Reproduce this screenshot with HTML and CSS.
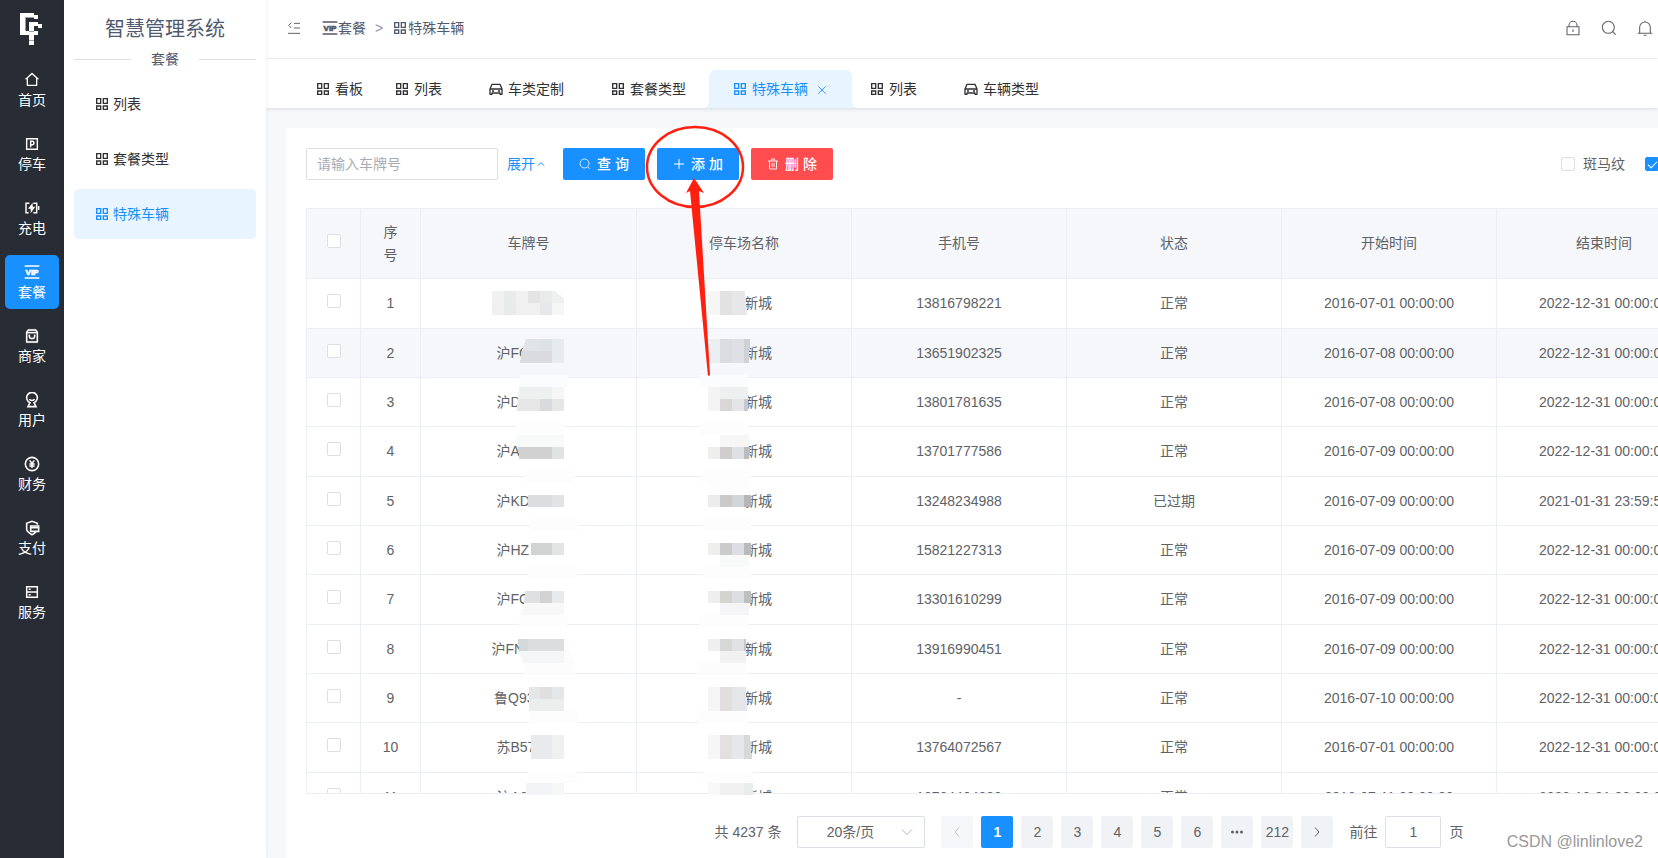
FILE: index.html
```html
<!DOCTYPE html>
<html lang="zh-CN">
<head>
<meta charset="utf-8">
<title>智慧管理系统</title>
<link rel="stylesheet" href="styles.css">
</head>
<body>
<svg class="sprite" aria-hidden="true">
  <symbol id="i-grid" viewBox="0 0 24 24"><path fill="none" stroke="currentColor" stroke-width="2" d="M4 4h6v7H4zM14 4h6v7h-6zM4 15h6v5H4zM14 15h6v5h-6z"/></symbol>
  <symbol id="i-home" viewBox="0 0 24 24"><path fill="currentColor" d="M19 21H5a1 1 0 0 1-1-1v-9H1l10.327-9.388a1 1 0 0 1 1.346 0L23 11h-3v9a1 1 0 0 1-1 1zM6 19h12V9.157l-6-5.454-6 5.454z"/></symbol>
  <symbol id="i-park" viewBox="0 0 24 24"><path fill="none" stroke="currentColor" stroke-width="2.200" d="M4 4h16v16H4zM10 17V8h2.500a2.500 2.500 0 0 1 0 5H10"/></symbol>
  <symbol id="i-charge" viewBox="0 0 24 24"><path fill="none" stroke="currentColor" stroke-width="2.200" d="M8 5H3v14h4M14 5h5v14h-5M22 9v6"/><path fill="currentColor" d="M13 4v6h4l-7 10v-7H6z"/></symbol>
  <symbol id="i-vip" viewBox="0 0 24 24"><path fill="currentColor" d="M1 2h22v2H1zM1 20h22v2H1z"/><text x="12" y="16.500" text-anchor="middle" class="vip-text">VIP</text></symbol>
  <symbol id="i-shop" viewBox="0 0 24 24"><path fill="currentColor" stroke="currentColor" stroke-width=".4" d="M6.500 2h11a1 1 0 0 1 .8.400L21 6v15a1 1 0 0 1-1 1H4a1 1 0 0 1-1-1V6l2.700-3.600a1 1 0 0 1 .8-.400zM19 8H5v12h14zm-.500-2L17 4H7L5.500 6zM9 10v2a3 3 0 0 0 6 0v-2h2v2a5 5 0 0 1-10 0v-2z"/></symbol>
  <symbol id="i-user" viewBox="0 0 24 24"><path fill="none" stroke="currentColor" stroke-width="2.400" d="M9 16a8 8 0 1 1 6 0l3 6H6zM8.500 10.500c1 3 6 3 7 0"/></symbol>
  <symbol id="i-money" viewBox="0 0 24 24"><circle cx="12" cy="12" r="10" fill="none" stroke="currentColor" stroke-width="2.400"/><path fill="none" stroke="currentColor" stroke-width="2.200" d="M8.500 6.500L12 11l3.500-4.500M8 12h8M8 15h8M12 11v7"/></symbol>
  <symbol id="i-pay" viewBox="0 0 24 24"><path fill="none" stroke="currentColor" stroke-width="2.400" d="M20 7V5l-8-3-8 3v9c0 4 4 6 8 8 3-1 5-3 6-4M10 9h12v8H10z"/><path stroke="currentColor" stroke-width="2.500" d="M10 11.500h12"/></symbol>
  <symbol id="i-server" viewBox="0 0 24 24"><path fill="none" stroke="currentColor" stroke-width="2.200" d="M4 4h16v16H4zM4 12h16M7 8h3M7 16h3"/></symbol>
  <symbol id="i-car" viewBox="0 0 24 24"><path fill="none" stroke="currentColor" stroke-width="2" stroke-linejoin="round" d="M3 20v-8l3-7h12l3 7v8h-3v-2H6v2zM3 12h18M6 15h3M15 15h3"/></symbol>
  <symbol id="i-fold" viewBox="0 0 24 24"><path fill="none" stroke="currentColor" stroke-width="1.500" d="M12 5h9M12 12h9M3 20h18M8 4L4 8l4 4"/></symbol>
  <symbol id="i-lock" viewBox="0 0 24 24"><path fill="none" stroke="currentColor" stroke-width="1.600" d="M3 10h18v12H3zM6 10V8a6 6 0 0 1 12 0v2M12 14v4"/></symbol>
  <symbol id="i-search" viewBox="0 0 24 24"><circle cx="11" cy="11" r="9" fill="none" stroke="currentColor" stroke-width="1.600"/><path stroke="currentColor" stroke-width="1.600" d="M17.500 17.500L22 22"/></symbol>
  <symbol id="i-bell" viewBox="0 0 24 24"><path fill="none" stroke="currentColor" stroke-width="1.600" d="M1 20h22M4 20v-9a8 8 0 0 1 16 0v9M12 1v2M10 23h4"/></symbol>
  <symbol id="i-plus" viewBox="0 0 24 24"><path stroke="currentColor" stroke-width="2" d="M12 2v20M2 12h20"/></symbol>
  <symbol id="i-trash" viewBox="0 0 24 24"><path fill="none" stroke="currentColor" stroke-width="1.800" d="M2 6h20M5 6v16h14V6M9 5V2h6v3M10 10v8M14 10v8"/></symbol>
  <symbol id="i-close" viewBox="0 0 24 24"><path stroke="currentColor" stroke-width="2" d="M3 3l18 18M21 3L3 21"/></symbol>
  <symbol id="i-left" viewBox="0 0 24 24"><path fill="none" stroke="currentColor" stroke-width="2" d="M16 3l-8 9 8 9"/></symbol>
  <symbol id="i-right" viewBox="0 0 24 24"><path fill="none" stroke="currentColor" stroke-width="2" d="M8 3l8 9-8 9"/></symbol>
  <symbol id="i-up" viewBox="0 0 24 24"><path fill="none" stroke="currentColor" stroke-width="3" d="M3 17l9-9 9 9"/></symbol>
  <symbol id="i-down" viewBox="0 0 24 24"><path fill="none" stroke="currentColor" stroke-width="1.800" d="M2 7l10 10L22 7"/></symbol>
</svg>

<div class="app">
  <nav class="rail" aria-label="主导航">
    <svg class="logo" viewBox="0 0 24 32" aria-hidden="true">
      <path fill="#fff" d="M0 0h14v4H5v14h4v4H0zM14 2h4v4h-4zM9 9h9v4h-4v5h4v4h-4v10H9zM18 11h4v4h-4z"/>
      <path fill="#9a9da2" d="M5 4h9v1H6v13H5zM9 27h5v1H9zM9 18h5v1H9z"/>
    </svg>
    <a class="rail-item" href="#"><svg class="icon"><use href="#i-home"/></svg>首页</a>
    <a class="rail-item" href="#"><svg class="icon"><use href="#i-park"/></svg>停车</a>
    <a class="rail-item" href="#"><svg class="icon"><use href="#i-charge"/></svg>充电</a>
    <a class="rail-item active" href="#"><svg class="icon"><use href="#i-vip"/></svg>套餐</a>
    <a class="rail-item" href="#"><svg class="icon"><use href="#i-shop"/></svg>商家</a>
    <a class="rail-item" href="#"><svg class="icon"><use href="#i-user"/></svg>用户</a>
    <a class="rail-item" href="#"><svg class="icon"><use href="#i-money"/></svg>财务</a>
    <a class="rail-item" href="#"><svg class="icon"><use href="#i-pay"/></svg>支付</a>
    <a class="rail-item" href="#"><svg class="icon"><use href="#i-server"/></svg>服务</a>
  </nav>

  <aside class="side">
    <h1 class="side-title">智慧管理系统</h1>
    <div class="side-divider">套餐</div>
    <a class="side-item" href="#"><svg class="icon"><use href="#i-grid"/></svg>列表</a>
    <a class="side-item" href="#"><svg class="icon"><use href="#i-grid"/></svg>套餐类型</a>
    <a class="side-item active" href="#"><svg class="icon"><use href="#i-grid"/></svg>特殊车辆</a>
  </aside>

  <main class="main">
    <header class="header">
      <button class="icon-btn" type="button" aria-label="折叠"><svg class="icon"><use href="#i-fold"/></svg></button>
      <div class="crumbs">
        <a href="#"><svg class="icon"><use href="#i-vip"/></svg>套餐</a>
        <span class="crumb-sep">&gt;</span>
        <a href="#"><svg class="icon"><use href="#i-grid"/></svg>特殊车辆</a>
      </div>
      <div class="header-tools">
        <button class="icon-btn" type="button" aria-label="锁屏"><svg class="icon"><use href="#i-lock"/></svg></button>
        <button class="icon-btn" type="button" aria-label="搜索"><svg class="icon"><use href="#i-search"/></svg></button>
        <button class="icon-btn" type="button" aria-label="通知"><svg class="icon"><use href="#i-bell"/></svg></button>
      </div>
    </header>

    <nav class="tabs" aria-label="标签页">
      <a class="tab pinned" href="#"><svg class="icon"><use href="#i-grid"/></svg>看板</a>
      <a class="tab near" href="#"><svg class="icon"><use href="#i-grid"/></svg>列表</a>
      <a class="tab" href="#"><svg class="icon"><use href="#i-car"/></svg>车类定制</a>
      <a class="tab" href="#"><svg class="icon"><use href="#i-grid"/></svg>套餐类型</a>
      <a class="tab active" href="#"><svg class="icon"><use href="#i-grid"/></svg>特殊车辆<svg class="tab-close"><use href="#i-close"/></svg></a>
      <a class="tab after" href="#"><svg class="icon"><use href="#i-grid"/></svg>列表</a>
      <a class="tab" href="#"><svg class="icon"><use href="#i-car"/></svg>车辆类型</a>
    </nav>

    <section class="card">
      <div class="toolbar">
        <input class="field" type="text" placeholder="请输入车牌号" aria-label="车牌号">
        <a class="expand" href="#">展开<svg class="caret"><use href="#i-up"/></svg></a>
        <button class="btn" type="button"><svg class="btn-icon"><use href="#i-search"/></svg>查 询</button>
        <button class="btn" type="button"><svg class="btn-icon"><use href="#i-plus"/></svg>添 加</button>
        <button class="btn danger" type="button"><svg class="btn-icon"><use href="#i-trash"/></svg>删 除</button>
        <div class="options">
          <label class="option"><input class="check" type="checkbox">斑马纹</label>
          <input class="check" type="checkbox" checked aria-label="边框">
        </div>
      </div>

      <div class="table-wrap">
        <table class="table">
          <colgroup><col class="c-check"><col class="c-no"><col class="c-plate"><col class="c-data"><col class="c-data"><col class="c-data"><col class="c-data"><col class="c-data"></colgroup>
          <thead>
            <tr><th><input class="check" type="checkbox" aria-label="全选"></th><th><span class="narrow">序号</span></th><th>车牌号</th><th>停车场名称</th><th>手机号</th><th>状态</th><th>开始时间</th><th>结束时间</th></tr>
          </thead>
          <tbody>
            <tr><td><input class="check" type="checkbox" aria-label="选择 1"></td><td>1</td><td></td><td><span class="lot">新城</span></td><td>13816798221</td><td>正常</td><td>2016-07-01 00:00:00</td><td>2022-12-31 00:00:00</td></tr>
            <tr class="hover"><td><input class="check" type="checkbox" aria-label="选择 2"></td><td>2</td><td><span class="plate">沪FC</span></td><td><span class="lot">新城</span></td><td>13651902325</td><td>正常</td><td>2016-07-08 00:00:00</td><td>2022-12-31 00:00:00</td></tr>
            <tr><td><input class="check" type="checkbox" aria-label="选择 3"></td><td>3</td><td><span class="plate">沪D</span></td><td><span class="lot">新城</span></td><td>13801781635</td><td>正常</td><td>2016-07-08 00:00:00</td><td>2022-12-31 00:00:00</td></tr>
            <tr><td><input class="check" type="checkbox" aria-label="选择 4"></td><td>4</td><td><span class="plate">沪A</span></td><td><span class="lot">新城</span></td><td>13701777586</td><td>正常</td><td>2016-07-09 00:00:00</td><td>2022-12-31 00:00:00</td></tr>
            <tr><td><input class="check" type="checkbox" aria-label="选择 5"></td><td>5</td><td><span class="plate">沪KD</span></td><td><span class="lot">新城</span></td><td>13248234988</td><td>已过期</td><td>2016-07-09 00:00:00</td><td>2021-01-31 23:59:59</td></tr>
            <tr><td><input class="check" type="checkbox" aria-label="选择 6"></td><td>6</td><td><span class="plate">沪HZ</span></td><td><span class="lot">新城</span></td><td>15821227313</td><td>正常</td><td>2016-07-09 00:00:00</td><td>2022-12-31 00:00:00</td></tr>
            <tr><td><input class="check" type="checkbox" aria-label="选择 7"></td><td>7</td><td><span class="plate">沪FC</span></td><td><span class="lot">新城</span></td><td>13301610299</td><td>正常</td><td>2016-07-09 00:00:00</td><td>2022-12-31 00:00:00</td></tr>
            <tr><td><input class="check" type="checkbox" aria-label="选择 8"></td><td>8</td><td><span class="plate long">沪FN</span></td><td><span class="lot">新城</span></td><td>13916990451</td><td>正常</td><td>2016-07-09 00:00:00</td><td>2022-12-31 00:00:00</td></tr>
            <tr><td><input class="check" type="checkbox" aria-label="选择 9"></td><td>9</td><td><span class="plate mid">鲁Q93</span></td><td><span class="lot">新城</span></td><td>-</td><td>正常</td><td>2016-07-10 00:00:00</td><td>2022-12-31 00:00:00</td></tr>
            <tr><td><input class="check" type="checkbox" aria-label="选择 10"></td><td>10</td><td><span class="plate">苏B57</span></td><td><span class="lot">新城</span></td><td>13764072567</td><td>正常</td><td>2016-07-01 00:00:00</td><td>2022-12-31 00:00:00</td></tr>
            <tr><td><input class="check" type="checkbox" aria-label="选择 11"></td><td>11</td><td><span class="plate">沪A6</span></td><td><span class="lot">新城</span></td><td>13764404888</td><td>正常</td><td>2016-07-11 00:00:00</td><td>2022-12-31 00:00:00</td></tr>
          </tbody>
        </table>
      </div>

      <div class="pager">
        <span class="total">共 4237 条</span>
        <span class="select-box"><select class="size" aria-label="每页条数"><option>20条/页</option></select><svg class="select-arrow"><use href="#i-down"/></svg></span>
        <div class="pages">
          <button class="page" type="button" disabled aria-label="上一页"><svg class="page-icon"><use href="#i-left"/></svg></button>
          <button class="page current" type="button">1</button>
          <button class="page" type="button">2</button>
          <button class="page" type="button">3</button>
          <button class="page" type="button">4</button>
          <button class="page" type="button">5</button>
          <button class="page" type="button">6</button>
          <button class="page" type="button" aria-label="更多"><svg class="page-icon" viewBox="0 0 12 12"><path fill="currentColor" d="M0 6a1.500 1.500 0 1 1 3 0a1.500 1.500 0 1 1-3 0M4.500 6a1.500 1.500 0 1 1 3 0a1.500 1.500 0 1 1-3 0M9 6a1.500 1.500 0 1 1 3 0a1.500 1.500 0 1 1-3 0"/></svg></button>
          <button class="page" type="button">212</button>
          <button class="page" type="button" aria-label="下一页"><svg class="page-icon"><use href="#i-right"/></svg></button>
        </div>
        <label class="jump">前往<input class="jump-input" type="text" value="1">页</label>
      </div>
    </section>
  </main>

  <svg class="notes" width="500" height="700" viewBox="300 110 500 700" aria-hidden="true">
    <!-- redaction over the plate column -->
    <g shape-rendering="crispEdges">
      <path fill="#f1f1f1" d="M492 291h12v12h-12zM516 291h12v12h-12z"/>
      <path fill="#e9eaea" d="M504 291h12v12h-12zM540 291h12v12h-12zM504 303h12v12h-12z"/>
      <path fill="#e4e4e4" d="M528 291h12v12h-12z"/>
      <path fill="#f0f0f0" d="M552 291h3l9 7v5h-12zM492 303h12v12h-12zM516 303h24v12h-24z"/>
      <path fill="#e7e8ea" d="M540 303h12v12h-12z"/><path fill="#f6f6f6" d="M552 303h12v12h-12z"/>

      <path fill="#e0e3e7" d="M526 339h14v12h-18z"/><path fill="#dee2e5" d="M540 339h12v12h-12z"/><path fill="#e7ebee" d="M552 339h12v24h-12z"/>
      <path fill="#dadbdf" d="M522 351h30v12h-32z"/>

      <path fill="#fbfcfe" d="M519 375h49v12h-49z"/><path fill="#eeefef" d="M519 387h33v12h-34z"/><path fill="#f6f6f6" d="M552 387h12v12h-12z"/>
      <path fill="#e6e6e7" d="M518 399h46v12h-47z"/><path fill="#d9dadc" d="M540 399h12v12h-12z"/>

      <path fill="#fdfdfe" d="M516 423h49v12h-49z"/><path fill="#f8f9f9" d="M516 435h48v12h-47z"/>
      <path fill="#d1d1d1" d="M518 447h34v12h-33z"/><path fill="#e1e2e2" d="M552 447h12v12h-12z"/>

      <path fill="#fdfdfe" d="M524 471h50v12h-50z"/><path fill="#fff" d="M528 483h36v12h-36z"/>
      <path fill="#dcddde" d="M528 495h24v12h-24z"/><path fill="#e2e3e4" d="M552 495h12v12h-12z"/>

      <path fill="#fdfdfe" d="M530 519h49v12h-49z"/><path fill="#d1d2d2" d="M531 543h21v12h-21z"/><path fill="#e3e4e4" d="M552 543h12v12h-12z"/>

      <path fill="#fdfdfe" d="M528 567h49v12h-49z"/><path fill="#dfe0e2" d="M525 591h15v12h-16z"/><path fill="#d2d2d3" d="M540 591h12v12h-12z"/><path fill="#e9eaec" d="M552 591h12v12h-12z"/>
      <path fill="#f8f8f8" d="M524 603h40v12h-43z"/>

      <path fill="#fdfdfe" d="M519 615h50l-2 12h-48z"/><path fill="#d4d8db" d="M518 639h10v12h-9z"/><path fill="#dcdddf" d="M528 639h36v12h-36z"/>
      <path fill="#f4f5f6" d="M520 651h44v12h-41z"/><path fill="#fcfcfc" d="M564 639h3l7 24h-10zM524 663h51v12h-51z"/>

      <path fill="#e5e6e7" d="M529 687h35v12h-35z"/><path fill="#dfdfe0" d="M540 687h12v12h-12z"/><path fill="#eceded" d="M529 699h35v12h-35z"/><path fill="#fdfdfe" d="M529 711h49v12h-49z"/>

      <path fill="#e9eaeb" d="M531 735h21v24h-21z"/><path fill="#eff0f0" d="M552 735h12v24h-12z"/>
      <path fill="#fdfdfe" d="M528 771h49v12h-49z"/><path fill="#f3f4f6" d="M526 783h26v12h-26z"/><path fill="#f6f8f7" d="M552 783h12v12h-12z"/>
    </g>
    <!-- redaction over the parking lot column -->
    <g shape-rendering="crispEdges">
      <path fill="#f6f6f5" d="M708 291h12v24h-12z"/><path fill="#e3e2e2" d="M720 291h12v24h-12z"/><path fill="#e7e7e9" d="M732 291h13l2 24h-15z"/>

      <path fill="#eceff2" d="M708 339h12v24h-12z"/><path fill="#dadce0" d="M720 339h12v24h-12z"/><path fill="#dee0e6" d="M732 339h12v24h-12z"/><path fill="#d0d1d6" d="M744 339h6l-1 24h-5z"/>

      <path fill="#fbfcfe" d="M699 375h49v12h-49z"/><path fill="#f4f4f4" d="M708 387h12v24h-12z"/><path fill="#eeefef" d="M720 387h28v12h-28z"/><path fill="#d8d7d5" d="M720 399h12v12h-12z"/><path fill="#e4e5e8" d="M732 399h12v12h-12z"/><path fill="#c8c8ca" d="M744 399h4v12h-4z"/>

      <path fill="#fdfdfe" d="M699 423h49v12h-49z"/><path fill="#f6f6f6" d="M720 435h29v12h-29z"/><path fill="#eeeeed" d="M708 447h12v12h-12z"/><path fill="#cfcecd" d="M720 447h12v12h-12z"/><path fill="#dfe0e3" d="M732 447h12v12h-12z"/><path fill="#bcbcbe" d="M744 447h6l-1 12h-5z"/>

      <path fill="#fdfdfd" d="M702 471h48v24h-42v-12h-6z"/><path fill="#ececec" d="M708 495h12v12h-12z"/><path fill="#cbcac9" d="M720 495h12v12h-12z"/><path fill="#d2d6d9" d="M732 495h12v12h-12z"/><path fill="#b7b5b8" d="M744 495h7v12h-7z"/>

      <path fill="#fdfdfe" d="M703 519h48v12h-48z"/><path fill="#eeeeed" d="M708 543h12v12h-12z"/><path fill="#cbcbcb" d="M720 543h12v12h-12z"/><path fill="#dddee4" d="M732 543h12v12h-12z"/><path fill="#bababc" d="M744 543h7v12h-7z"/><path fill="#f8f9f9" d="M720 555h30v12h-30z"/>

      <path fill="#fdfdfe" d="M703 567h48v12h-48z"/><path fill="#eeeeee" d="M708 591h12v12h-12z"/><path fill="#d3d3d0" d="M720 591h12v12h-12z"/><path fill="#dddee2" d="M732 591h12v12h-12z"/><path fill="#bebebf" d="M744 591h7v12h-7z"/><path fill="#f5f5f7" d="M720 603h30l-1 12h-29z"/>

      <path fill="#fdfdfe" d="M699 615h49v12h-49z"/><path fill="#efefef" d="M708 639h12v12h-12z"/><path fill="#d6d8d6" d="M720 639h12v12h-12z"/><path fill="#e0e2e6" d="M732 639h12v12h-12z"/><path fill="#c6c8c9" d="M744 639h2v12h-2z"/><path fill="#f1f1f1" d="M720 651h26v12h-26z"/><path fill="#fcfcfc" d="M697 663h49v12h-49z"/>

      <path fill="#f5f5f5" d="M708 687h12v24h-12z"/><path fill="#e0dfde" d="M720 687h12v24h-12z"/><path fill="#e5e6e9" d="M732 687h14l1 24h-15z"/><path fill="#fdfdfe" d="M698 711h50v12h-50z"/>

      <path fill="#f5f6f5" d="M708 735h12v24h-12z"/><path fill="#e3e1df" d="M720 735h12v24h-12z"/><path fill="#e6e7ea" d="M732 735h12v24h-12z"/><path fill="#d9d8d9" d="M744 735h6l2 24h-8z"/>
      <path fill="#fdfdfe" d="M703 771h50v12h-50z"/><path fill="#f8f8f8" d="M708 783h12v12h-12z"/><path fill="#f1f1f2" d="M720 783h24v12h-24z"/><path fill="#eaebeb" d="M744 783h9v12h-9z"/>
    </g>
    <!-- callout around the add button -->
    <ellipse cx="695" cy="167" rx="48" ry="40" fill="none" stroke="#ff2010" stroke-width="2.500"/>
    <path fill="#ff2010" d="M694 178l10 15-5-2 11 184-2 1-18-185-4 2z"/>
  </svg>
  <div class="watermark">CSDN @linlinlove2</div>
</div>
</body>
</html>
```
FILE: styles.css
```css
* { box-sizing: border-box; }
body {
  margin: 0;
  font: 14px/23px "Liberation Sans", "Noto Sans CJK SC", sans-serif;
  color: #606266;
  background: #f6f8f9;
}
a { color: inherit; text-decoration: none; }
button, input, select { font: inherit; color: inherit; }
button { cursor: pointer; }
.sprite { display: none; }
.vip-text { font: bold 12px "Liberation Sans", sans-serif; fill: currentColor; stroke: currentColor; stroke-width: 1px; }
.icon { width: 16px; height: 16px; flex: none; }

.app { position: relative; display: flex; height: 100vh; overflow: hidden; }

/* dark navigation rail */
.rail {
  flex: none;
  width: 64px;
  padding: 13px 5px;
  display: flex;
  flex-direction: column;
  align-items: stretch;
  gap: 10px;
  background: #282c34;
  color: #fff;
}
.logo { width: 24px; height: 32px; margin: 0 auto 8px 15px; flex: none; }
.rail-item {
  height: 54px;
  padding-top: 3px;
  display: flex;
  flex-direction: column;
  align-items: center;
  justify-content: center;
  line-height: 24px;
  border-radius: 5px;
  flex: none;
}
.rail-item.active { background: #1890ff; }

/* second level menu */
.side {
  flex: none;
  width: 202px;
  padding: 14px 10px;
  background: #fff;
  display: flex;
  flex-direction: column;
  gap: 5px;
  z-index: 1;
  box-shadow: 0 0 4px rgba(0, 21, 41, 0.08);
}
.side-title { margin: 0; font-size: 20px; font-weight: 400; line-height: 30px; text-align: center; color: #515a6e; }
.side-divider {
  display: flex;
  align-items: center;
  gap: 20px;
  line-height: 20px;
  margin-bottom: 5px;
  color: #515a6e;
}
.side-divider::before, .side-divider::after { content: ""; flex: 1; height: 1px; background: #dcdfe6; }
.side-item {
  height: 50px;
  padding-left: 20px;
  display: flex;
  align-items: center;
  gap: 3px;
  border-radius: 5px;
  color: #303133;
}
.side-item.active { background: #e8f4ff; color: #1890ff; }

.main { flex: 1; min-width: 0; display: flex; flex-direction: column; }
.header {
  flex: none;
  height: 59px;
  padding: 0 5px 2px 20px;
  display: flex;
  align-items: center;
  gap: 20px;
  background: #fff;
  border-bottom: 1px solid #f4f5f6;
}
.icon-btn { display: flex; padding: 0; border: 0; background: none; color: #606266; }
.crumbs { display: flex; align-items: center; gap: 9px; color: #515a6e; }
.crumbs a { display: flex; align-items: center; }
.crumb-sep { color: #909399; }
.header-tools { margin-left: auto; display: flex; gap: 20px; }

/* page tabs */
.tabs {
  flex: none;
  height: 49px;
  padding-left: 26px;
  display: flex;
  align-items: flex-end;
  background: #fff;
  box-shadow: 0 1px 4px rgba(0, 21, 41, 0.12);
}
.tab {
  position: relative;
  height: 38px;
  padding: 0 23px;
  display: flex;
  align-items: center;
  gap: 4px;
  color: #303133;
  white-space: nowrap;
}
.tab.pinned { padding-right: 8px; }
.tab.after { padding-left: 17px; }
.tab.active { color: #1890ff; background: #e8f4ff; border-radius: 6px 6px 0 0; padding-right: 25px; }
.tab.active::before, .tab.active::after {
  content: "";
  position: absolute;
  bottom: 0;
  width: 6px;
  height: 6px;
}
.tab.active::before { right: 100%; background: radial-gradient(circle at 0 0, transparent 6px, #e8f4ff 6px); }
.tab.active::after { left: 100%; background: radial-gradient(circle at 100% 0, transparent 6px, #e8f4ff 6px); }
.tab-close { width: 10px; height: 10px; margin: 2px 0 0 5px; }

.card {
  flex: 1;
  min-height: 0;
  margin: 20px 0 0 20px;
  padding: 20px 0 10px 20px;
  display: flex;
  flex-direction: column;
  background: #fff;
}
.toolbar { flex: none; display: flex; align-items: center; margin-bottom: 28px; }
.field {
  width: 192px;
  height: 32px;
  padding: 0 10px;
  border: 1px solid #dcdfe6;
  border-radius: 2px;
  background: #fff;
}
.field::placeholder { color: #a8abb2; opacity: 1; }
.expand { display: flex; align-items: center; gap: 2px; margin: 0 18px 0 9px; color: #1890ff; }
.caret { width: 8px; height: 8px; }
.btn {
  height: 32px;
  min-width: 82px;
  margin-right: 12px;
  padding: 0 15px;
  display: flex;
  align-items: center;
  justify-content: center;
  gap: 6px;
  border: 0;
  border-radius: 2px;
  background: #1890ff;
  color: #fff;
  font-weight: 500;
}
.btn.danger { background: #ff4d4f; }
.btn-icon { width: 12px; height: 12px; }
.options { margin: 0 -1px 0 auto; display: flex; align-items: center; gap: 20px; }
.option { display: flex; align-items: center; gap: 8px; }
.check {
  appearance: none;
  flex: none;
  width: 14px;
  height: 14px;
  margin: 0;
  border: 1px solid #dcdfe6;
  border-radius: 2px;
  background: #fff;
  vertical-align: middle;
}
.check:checked { display: grid; place-items: center; border-color: #1890ff; background: #1890ff; }
.check:checked::after {
  content: "";
  width: 8px;
  height: 4px;
  border: solid #fff;
  border-width: 0 0 1px 1px;
  transform: translateY(-1px) rotate(-45deg);
}

/* data table */
.table-wrap { flex: 1; min-height: 0; overflow: hidden; border: solid #ebeef5; border-width: 1px 0 1px 1px; }
.table { table-layout: fixed; width: 1405px; border-collapse: separate; border-spacing: 0; text-align: center; }
.c-check { width: 54px; }
.c-no { width: 60px; }
.c-plate { width: 216px; }
.c-data { width: 215px; }
.table th, .table td { padding: 0; border: solid #ebeef5; border-width: 0 1px 1px 0; font-weight: 400; }
.table th { height: 70px; background: #f5f7fa; }
.table td { height: 49px; }
.table tr:nth-child(3n+1) td { height: 50px; }
.table .hover td { background: #f5f7fa; }
.table .check { margin-bottom: 6px; }
.narrow { display: inline-block; width: 14px; }
.plate { display: inline-block; width: 64px; text-align: left; }
.plate.mid { width: 69px; }
.plate.long { width: 74px; }
.lot { display: inline-block; width: 56px; text-align: right; }

/* pagination */
.pager {
  flex: none;
  display: flex;
  align-items: center;
  justify-content: center;
  gap: 16px;
  margin-top: 22px;
  padding-left: 214px;
  white-space: nowrap;
}
.select-box { position: relative; display: flex; }
.size {
  appearance: none;
  width: 128px;
  height: 32px;
  padding: 0 30px 0 8px;
  border: 1px solid #dcdfe6;
  border-radius: 2px;
  background: #fff;
  text-align: center;
  text-align-last: center;
}
.select-arrow { position: absolute; right: 12px; top: 10px; width: 12px; height: 12px; color: #a8abb2; pointer-events: none; }
.pages { display: flex; gap: 8px; }
.page {
  width: 32px;
  height: 32px;
  padding: 0;
  display: flex;
  align-items: center;
  justify-content: center;
  border: 0;
  border-radius: 2px;
  background: #f0f2f5;
}
.page:disabled { background: #f5f7fa; color: #c0c4cc; }
.page.current { background: #1890ff; color: #fff; font-weight: 700; }
.page-icon { width: 12px; height: 12px; }
.jump { display: flex; align-items: center; gap: 8px; }
.jump-input { width: 56px; height: 32px; padding: 0; text-align: center; border: 1px solid #dcdfe6; border-radius: 2px; }

.notes { position: absolute; left: 300px; top: 110px; z-index: 2; pointer-events: none; }
.watermark { position: absolute; right: 15px; bottom: 4px; z-index: 3; font-size: 16px; line-height: 24px; color: #999; text-shadow: 0 0 1px #fff; }
```
